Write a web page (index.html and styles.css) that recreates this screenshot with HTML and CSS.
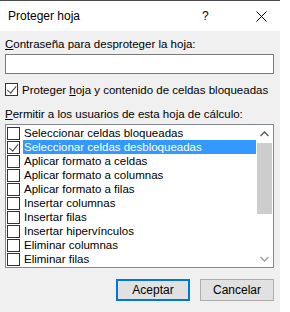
FILE: index.html
```html
<!DOCTYPE html>
<html lang="es">
<head>
  <meta charset="UTF-8" />
  <title>Proteger hoja</title>
  <link rel="stylesheet" href="styles.css">
</head>
<body>

<div class="dialog">
  <div class="titlebar">
    <span class="title">Proteger hoja</span>
    <span class="help">?</span>
    <span class="close">
      <svg width="11" height="11" viewBox="0 0 11 11"><path d="M0.5 0.5 L10.5 10.5 M10.5 0.5 L0.5 10.5" stroke="#000" stroke-width="1" fill="none"/></svg>
    </span>
  </div>

  <div class="content">
    <div class="label"><u>C</u>ontraseña para desproteger la hoja:</div>
    <div class="input"></div>

    <div class="check-row">
      <span class="box checked"></span>
      <span>Proteger <u>h</u>oja y contenido de celdas bloqueadas</span>
    </div>

    <div class="label permit"><u>P</u>ermitir a los usuarios de esta hoja de cálculo:</div>

    <div class="listbox">
      <div class="items">
        <div class="item"><span class="box"></span><span class="txt">Seleccionar celdas bloqueadas</span></div>
        <div class="item selected"><span class="box checked"></span><span class="txt">Seleccionar celdas desbloqueadas</span></div>
        <div class="item"><span class="box"></span><span class="txt">Aplicar formato a celdas</span></div>
        <div class="item"><span class="box"></span><span class="txt">Aplicar formato a columnas</span></div>
        <div class="item"><span class="box"></span><span class="txt">Aplicar formato a filas</span></div>
        <div class="item"><span class="box"></span><span class="txt">Insertar columnas</span></div>
        <div class="item"><span class="box"></span><span class="txt">Insertar filas</span></div>
        <div class="item"><span class="box"></span><span class="txt">Insertar hipervínculos</span></div>
        <div class="item"><span class="box"></span><span class="txt">Eliminar columnas</span></div>
        <div class="item"><span class="box"></span><span class="txt">Eliminar filas</span></div>
      </div>
      <div class="scrollbar">
        <div class="arrow">
          <svg width="9" height="6" viewBox="0 0 9 6"><path d="M0.5 5 L4.5 1 L8.5 5" stroke="#606060" stroke-width="1.5" fill="none"/></svg>
        </div>
        <div class="track"><div class="thumb"></div></div>
        <div class="arrow">
          <svg width="9" height="6" viewBox="0 0 9 6"><path d="M0.5 1 L4.5 5 L8.5 1" stroke="#a0a0a0" stroke-width="1.5" fill="none"/></svg>
        </div>
      </div>
    </div>

    <div class="buttons">
      <button class="btn default">Aceptar</button>
      <button class="btn">Cancelar</button>
    </div>
  </div>
</div>

</body>
</html>
```

FILE: styles.css
```css
* {
  box-sizing: border-box;
}

body {
  margin: 0;
  background: #fff;
  font-family: "Liberation Sans", Arial, sans-serif;
  font-size: 11.5px;
  color: #000;
}

.dialog {
  width: 280px;
  height: 312px;
  border-top: 1px solid #4a4a4a;
  display: flex;
  flex-direction: column;
}

.titlebar {
  height: 30px;
  background: #fff;
  display: flex;
  align-items: center;
  padding-left: 8px;
}

.title {
  flex: 1;
  font-size: 12px;
}

.help {
  width: 14px;
  margin-right: 40px;
  font-size: 12px;
}

.close {
  width: 24px;
  display: flex;
  align-items: center;
}

.content {
  flex: 1;
  background: #f0f0f0;
  padding: 6px 6px 0 5px;
  display: flex;
  flex-direction: column;
  white-space: nowrap;
}

.label {
  line-height: 15px;
}

.input {
  margin-top: 2px;
  height: 20px;
  background: #fff;
  border: 1px solid #7a7a7a;
}

.check-row {
  margin-top: 8px;
  display: flex;
  align-items: center;
  gap: 4px;
  height: 15px;
}

.permit {
  margin-top: 10px;
}

.box {
  display: inline-block;
  width: 13px;
  height: 13px;
  border: 1px solid #333;
  background: #fff;
  flex: none;
  position: relative;
}

.box.checked::after {
  content: "";
  position: absolute;
  left: 2px;
  top: 0px;
  width: 4px;
  height: 8px;
  border-right: 1px solid #444;
  border-bottom: 1px solid #444;
  transform: rotate(40deg);
  transform-origin: 60% 70%;
}

.listbox {
  margin-top: 2px;
  height: 144px;
  border: 1px solid #828790;
  background: #fff;
  display: flex;
}

.items {
  flex: 1;
  padding: 1px 0 0 1px;
}

.item {
  height: 14px;
  display: flex;
  align-items: center;
  gap: 3px;
}

.item .txt {
  flex: 1;
  line-height: 14px;
  padding-left: 1px;
}

.item.selected .txt {
  background: #3399ff;
  color: #fff;
}

.scrollbar {
  width: 17px;
  display: flex;
  flex-direction: column;
}

.arrow {
  height: 17px;
  display: flex;
  align-items: center;
  justify-content: center;
}

.track {
  flex: 1;
  padding: 1px 1px 0 1px;
}

.thumb {
  height: 71px;
  background: #cdcdcd;
}

.buttons {
  margin-top: 11px;
  display: flex;
  justify-content: flex-end;
  gap: 10px;
}

.btn {
  width: 74px;
  height: 22px;
  font-family: inherit;
  font-size: 12px;
  background: #e1e1e1;
  border: 1px solid #adadad;
  padding: 0;
  color: #000;
}

.btn.default {
  border: 2px solid #0078d7;
}
```
